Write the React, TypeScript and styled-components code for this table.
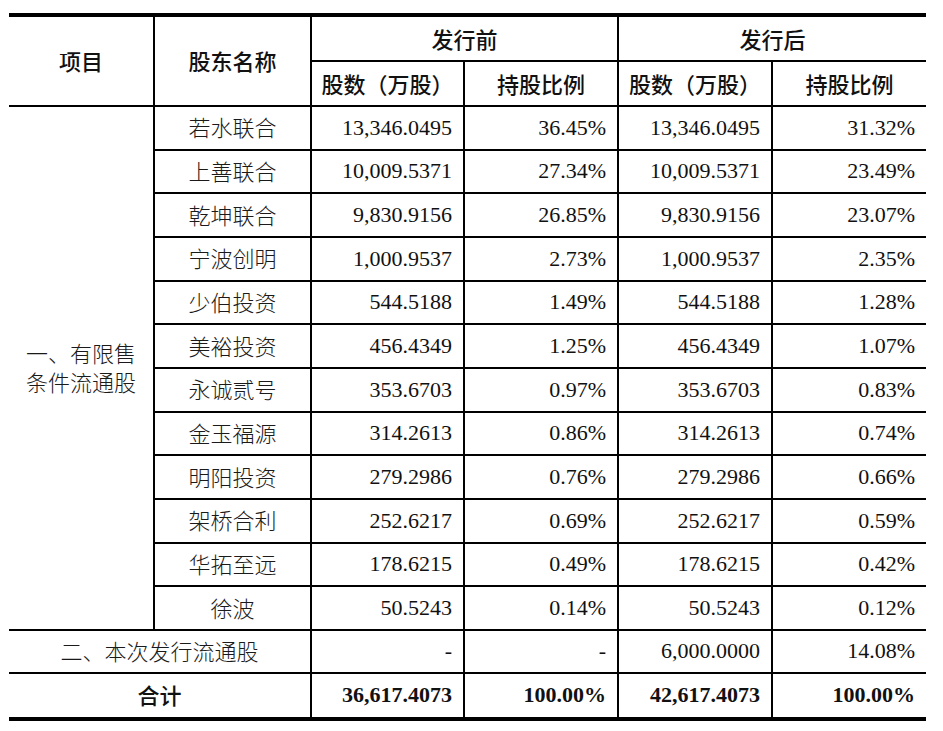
import React from "react";
import styled, { createGlobalStyle } from "styled-components";

const Global = createGlobalStyle`
  html, body {
    margin: 0;
    padding: 0;
    background: #ffffff;
  }
  body {
    font-family: "Liberation Serif", "Noto Sans CJK SC", serif;
    color: #111;
  }
`;

const Page = styled.div`
  padding: 13px 17px 0 9px;
  width: 917px;
`;

const Table = styled.table`
  width: 917px;
  table-layout: fixed;
  border-collapse: collapse;
  border-top: 4px solid #000;
  border-bottom: 4px solid #000;
  border-left: hidden;
  border-right: hidden;
  font-size: 22px;
`;

const HeadRow = styled.tr<{ $h: number }>`
  height: ${(p) => p.$h}px;
`;

const BodyRow = styled.tr<{ $h: number }>`
  height: ${(p) => p.$h}px;
`;

const HeadCell = styled.th`
  border: 2px solid #000;
  padding: 0 0 2px 0;
  text-align: center;
  vertical-align: middle;
  font-family: "Noto Sans CJK SC", sans-serif;
  font-weight: 500;
  color: #111;
  line-height: 28px;
`;

const NameCell = styled.td`
  border: 2px solid #000;
  padding: 0 0 2px 0;
  text-align: center;
  vertical-align: middle;
  font-family: "Noto Sans CJK SC", sans-serif;
  font-weight: 300;
  color: #1a1a1a;
  line-height: 29px;
`;

const NumCell = styled.td<{ $bold?: boolean }>`
  border: 2px solid #000;
  padding: 0 11px 0 0;
  text-align: right;
  vertical-align: middle;
  font-family: "Liberation Serif", serif;
  font-weight: ${(p) => (p.$bold ? 700 : 400)};
  color: #111;
  white-space: nowrap;
`;

const rows: string[][] = [
  ["若水联合", "13,346.0495", "36.45%", "13,346.0495", "31.32%"],
  ["上善联合", "10,009.5371", "27.34%", "10,009.5371", "23.49%"],
  ["乾坤联合", "9,830.9156", "26.85%", "9,830.9156", "23.07%"],
  ["宁波创明", "1,000.9537", "2.73%", "1,000.9537", "2.35%"],
  ["少伯投资", "544.5188", "1.49%", "544.5188", "1.28%"],
  ["美裕投资", "456.4349", "1.25%", "456.4349", "1.07%"],
  ["永诚贰号", "353.6703", "0.97%", "353.6703", "0.83%"],
  ["金玉福源", "314.2613", "0.86%", "314.2613", "0.74%"],
  ["明阳投资", "279.2986", "0.76%", "279.2986", "0.66%"],
  ["架桥合利", "252.6217", "0.69%", "252.6217", "0.59%"],
  ["华拓至远", "178.6215", "0.49%", "178.6215", "0.42%"],
  ["徐波", "50.5243", "0.14%", "50.5243", "0.12%"],
];

export default function App() {
  return (
    <Page>
      <Global />
      <Table>
        <colgroup>
          <col style={{ width: 145 }} />
          <col style={{ width: 157 }} />
          <col style={{ width: 153 }} />
          <col style={{ width: 154 }} />
          <col style={{ width: 154 }} />
          <col style={{ width: 154 }} />
        </colgroup>
        <thead>
          <HeadRow $h={46}>
            <HeadCell rowSpan={2}>项目</HeadCell>
            <HeadCell rowSpan={2}>股东名称</HeadCell>
            <HeadCell colSpan={2}>发行前</HeadCell>
            <HeadCell colSpan={2}>发行后</HeadCell>
          </HeadRow>
          <HeadRow $h={45}>
            <HeadCell>股数（万股）</HeadCell>
            <HeadCell>持股比例</HeadCell>
            <HeadCell>股数（万股）</HeadCell>
            <HeadCell>持股比例</HeadCell>
          </HeadRow>
        </thead>
        <tbody>
          {rows.map((r, i) => (
            <BodyRow key={r[0]} $h={43.67}>
              {i === 0 && (
                <NameCell rowSpan={rows.length}>
                  一、有限售
                  <br />
                  条件流通股
                </NameCell>
              )}
              <NameCell>{r[0]}</NameCell>
              <NumCell>{r[1]}</NumCell>
              <NumCell>{r[2]}</NumCell>
              <NumCell>{r[3]}</NumCell>
              <NumCell>{r[4]}</NumCell>
            </BodyRow>
          ))}
          <BodyRow $h={43}>
            <NameCell colSpan={2}>二、本次发行流通股</NameCell>
            <NumCell>-</NumCell>
            <NumCell>-</NumCell>
            <NumCell>6,000.0000</NumCell>
            <NumCell>14.08%</NumCell>
          </BodyRow>
          <BodyRow $h={46}>
            <HeadCell colSpan={2}>合计</HeadCell>
            <NumCell $bold>36,617.4073</NumCell>
            <NumCell $bold>100.00%</NumCell>
            <NumCell $bold>42,617.4073</NumCell>
            <NumCell $bold>100.00%</NumCell>
          </BodyRow>
        </tbody>
      </Table>
    </Page>
  );
}
